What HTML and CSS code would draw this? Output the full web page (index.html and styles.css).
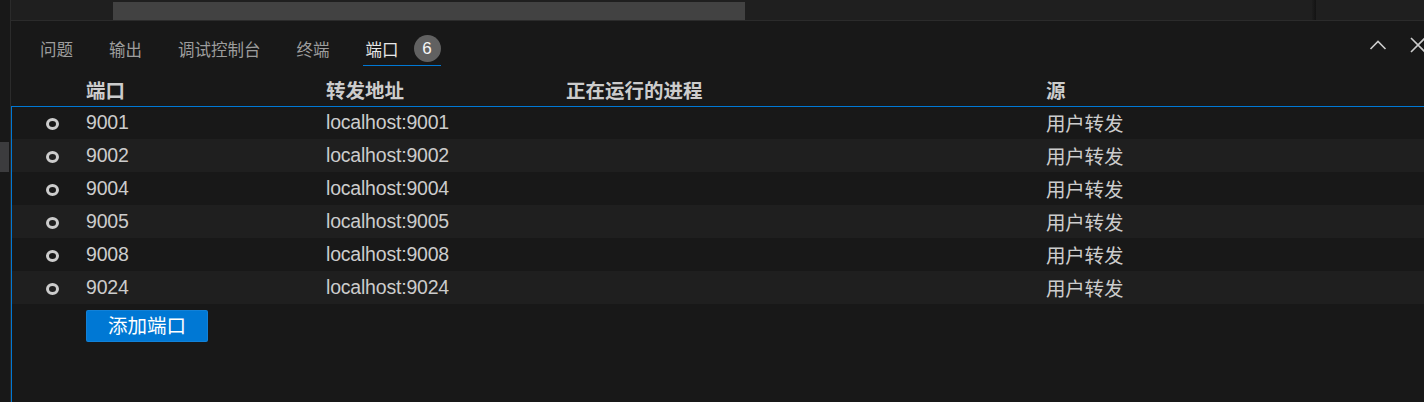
FILE: index.html
```html
<!DOCTYPE html>
<html lang="zh-CN">
<head>
<meta charset="utf-8">
<title>端口</title>
<link rel="stylesheet" href="styles.css">
</head>
<body>
<div class="app">
  <aside class="side"><div class="side-thumb"></div></aside>
  <main class="main">
    <div class="editor-strip">
      <div class="hthumb"></div>
      <div class="vshadow"></div>
    </div>
    <section class="panel">
      <div class="titlebar">
        <nav class="tabs">
          <div class="tab">问题</div>
          <div class="tab">输出</div>
          <div class="tab">调试控制台</div>
          <div class="tab">终端</div>
          <div class="tab active">端口<span class="badge">6</span></div>
        </nav>
        <div class="actions">
          <svg class="action" width="24" height="24" viewBox="0 0 24 24"><polyline points="4.5,16 12,8.5 19.5,16" fill="none" stroke="#cccccc" stroke-width="1.6"/></svg>
          <svg class="action" width="24" height="24" viewBox="0 0 24 24"><path d="M5 5 L19 19 M19 5 L5 19" fill="none" stroke="#cccccc" stroke-width="1.6"/></svg>
        </div>
      </div>
      <div class="row head">
        <div class="cell"></div>
        <div class="cell">端口</div>
        <div class="cell">转发地址</div>
        <div class="cell">正在运行的进程</div>
        <div class="cell">源</div>
      </div>
      <div class="list">
        <div class="row"><div class="cell"><span class="ring"></span></div><div class="cell">9001</div><div class="cell">localhost:9001</div><div class="cell"></div><div class="cell">用户转发</div></div>
        <div class="row"><div class="cell"><span class="ring"></span></div><div class="cell">9002</div><div class="cell">localhost:9002</div><div class="cell"></div><div class="cell">用户转发</div></div>
        <div class="row"><div class="cell"><span class="ring"></span></div><div class="cell">9004</div><div class="cell">localhost:9004</div><div class="cell"></div><div class="cell">用户转发</div></div>
        <div class="row"><div class="cell"><span class="ring"></span></div><div class="cell">9005</div><div class="cell">localhost:9005</div><div class="cell"></div><div class="cell">用户转发</div></div>
        <div class="row"><div class="cell"><span class="ring"></span></div><div class="cell">9008</div><div class="cell">localhost:9008</div><div class="cell"></div><div class="cell">用户转发</div></div>
        <div class="row"><div class="cell"><span class="ring"></span></div><div class="cell">9024</div><div class="cell">localhost:9024</div><div class="cell"></div><div class="cell">用户转发</div></div>
        <div class="add"><button class="btn" type="button">添加端口</button></div>
      </div>
    </section>
  </main>
</div>
</body>
</html>
```
FILE: styles.css
```css
html, body {
  margin: 0;
  padding: 0;
  width: 1424px;
  height: 402px;
  overflow: hidden;
  background: #181818;
  font-family: "Liberation Sans", "Noto Sans CJK SC", sans-serif;
  color: #cccccc;
}

.app {
  display: flex;
  width: 1424px;
  height: 402px;
}

.side {
  width: 10px;
  flex: none;
  background: #181818;
  border-right: 1px solid #2b2b2b;
}

.side-thumb {
  margin-top: 142px;
  width: 9px;
  height: 30px;
  background: #3c3c3e;
}

.main {
  flex: 1;
  display: flex;
  flex-direction: column;
  min-width: 0;
}

.editor-strip {
  height: 20px;
  flex: none;
  background: #1f1f1f;
  border-bottom: 1px solid #2b2b2b;
  display: flex;
}

.hthumb {
  margin-left: 102px;
  margin-top: 2px;
  width: 632px;
  height: 18px;
  background: #424242;
}

.vshadow {
  margin-left: auto;
  margin-right: 108px;
  width: 4px;
  background: linear-gradient(to right, #1d1d1d, #131313);
}

.panel {
  flex: 1;
  display: flex;
  flex-direction: column;
  background: #181818;
}

.titlebar {
  height: 52px;
  flex: none;
  display: flex;
  align-items: flex-start;
  padding-top: 11px;
  box-sizing: border-box;
}

.tabs {
  display: flex;
  gap: 30px;
  padding-left: 26px;
}

.tab {
  height: 33px;
  display: flex;
  align-items: center;
  padding: 0 3px;
  font-size: 16.5px;
  color: #9d9d9d;
  border-bottom: 1px solid transparent;
}

.tab.active {
  color: #e7e7e7;
  border-bottom-color: #0078d4;
  padding-right: 0;
}

.badge {
  margin-left: 15px;
  width: 27px;
  height: 27px;
  border-radius: 50%;
  background: #616161;
  color: #f8f8f8;
  font-size: 17px;
  display: flex;
  align-items: center;
  justify-content: center;
}

.actions {
  margin-left: auto;
  margin-right: -6px;
  display: flex;
  gap: 16px;
  margin-top: 1px;
}

.action {
  display: block;
}

.row {
  display: grid;
  grid-template-columns: 75px 240px 240px 480px 1fr;
  height: 33px;
  align-items: center;
  font-size: 19.5px;
}

.row .cell {
  white-space: nowrap;
}

.list .row .cell {
  letter-spacing: -0.2px;
}

.row.head {
  flex: none;
  font-weight: bold;
  color: #cccccc;
}

.list {
  flex: 1;
  position: relative;
}

.list::after {
  content: "";
  position: absolute;
  inset: 0;
  border-top: 1px solid #0078d4;
  border-left: 1px solid #0078d4;
  pointer-events: none;
}

.list .row:nth-child(even) {
  background: #1f1f1f;
}

.ring {
  display: block;
  margin-left: 35px;
  margin-top: 2px;
  width: 13px;
  height: 12px;
  box-sizing: border-box;
  border: 3px solid #cccccc;
  border-radius: 50%;
}

.add {
  padding-left: 75px;
  padding-top: 6px;
}

.btn {
  width: 122px;
  height: 32px;
  padding: 0;
  background: #0078d4;
  color: #ffffff;
  border: 1px solid rgba(255, 255, 255, 0.07);
  border-radius: 2px;
  font-family: "Liberation Sans", "Noto Sans CJK SC", sans-serif;
  font-size: 19.5px;
  line-height: 30px;
}
```
